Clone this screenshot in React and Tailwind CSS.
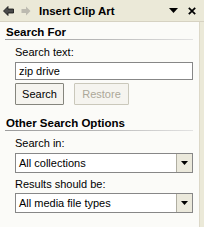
export default function App() {
  return (
    <div className="w-[204px] h-[227px] flex flex-col bg-[#fbfbf8] text-[11px] text-black overflow-hidden" style={{ fontFamily: '"Liberation Sans", Arial, sans-serif' }}>
      {/* title bar */}
      <div className="h-[22px] shrink-0 bg-[#ebe9d8] flex items-center pl-[3px] pr-[8px] border-b border-[#d6d2c2]">
        <svg width="11" height="10" viewBox="0 0 11 10">
          <path d="M0.5 5 L5 0.5 L5 3 L10.5 3 L10.5 7 L5 7 L5 9.5 Z" fill="#4a4a4a" stroke="#111" strokeWidth="0.8" />
        </svg>
        <svg width="10" height="10" viewBox="0 0 10 10" className="ml-[7px]">
          <path d="M9.5 5 L5 0.5 L5 3 L0.5 3 L0.5 7 L5 7 L5 9.5 Z" fill="#bcbab0" />
        </svg>
        <span className="ml-[8px] font-bold text-[11.5px] leading-[14px]">Insert Clip Art</span>
        <div className="flex-1" />
        <svg width="9" height="5" viewBox="0 0 9 5" className="mr-[10px]">
          <path d="M0 0 H9 L4.5 5 Z" fill="#000" />
        </svg>
        <svg width="8" height="8" viewBox="0 0 8 8">
          <path d="M0.8 0.8 L7.2 7.2 M7.2 0.8 L0.8 7.2" stroke="#000" strokeWidth="1.7" />
        </svg>
      </div>

      <div className="flex flex-1">
        <div className="flex-1 pl-[5px] pr-[6px] pt-[3px]">
          <div className="pl-[1px] font-bold text-[11.5px] leading-[14px]">Search For</div>
          <div className="h-px bg-gradient-to-r from-[#9c9c9c] via-[#b8b8b8] to-[#e2e2e2]" />

          <div className="pl-[10px] pt-[6px]">
            <div className="leading-[13px]">Search text:</div>
            <div className="mt-[3px] h-[18px] border border-[#878787] bg-white flex items-center pl-[3px] leading-[13px]">zip drive</div>
            <div className="mt-[3px] flex gap-[10px]">
              <div className="w-[49px] h-[22px] border border-[#85857d] rounded-[1px] bg-[#f5f4ef] flex items-center justify-center">Search</div>
              <div className="w-[55px] h-[22px] border border-[#cac8bb] rounded-[1px] bg-[#f5f4ef] text-[#aca899] flex items-center justify-center">Restore</div>
            </div>
          </div>

          <div className="mt-[11px] pl-[1px] font-bold text-[11.5px] leading-[14px]">Other Search Options</div>
          <div className="h-px bg-gradient-to-r from-[#9c9c9c] via-[#b8b8b8] to-[#e2e2e2]" />

          <div className="pl-[10px] pt-[6px]">
            <div className="leading-[13px]">Search in:</div>
            <div className="mt-[3px] h-[20px] border border-[#878787] bg-white flex items-center">
              <span className="flex-1 pl-[3px] leading-[13px]">All collections</span>
              <div className="w-[16px] h-full border-l border-[#b0aea2] bg-[#ebe9dc] flex items-center justify-center">
                <svg width="7" height="4" viewBox="0 0 7 4"><path d="M0 0 H7 L3.5 4 Z" fill="#000" /></svg>
              </div>
            </div>
            <div className="mt-[5px] leading-[13px]">Results should be:</div>
            <div className="mt-[2px] h-[20px] border border-[#878787] bg-white flex items-center">
              <span className="flex-1 pl-[3px] leading-[13px]">All media file types</span>
              <div className="w-[16px] h-full border-l border-[#b0aea2] bg-[#ebe9dc] flex items-center justify-center">
                <svg width="7" height="4" viewBox="0 0 7 4"><path d="M0 0 H7 L3.5 4 Z" fill="#000" /></svg>
              </div>
            </div>
          </div>
        </div>
        <div className="w-[5px] bg-[#ebe9d8] border-l border-[#dcd8c8]" />
      </div>
    </div>
  )
}
